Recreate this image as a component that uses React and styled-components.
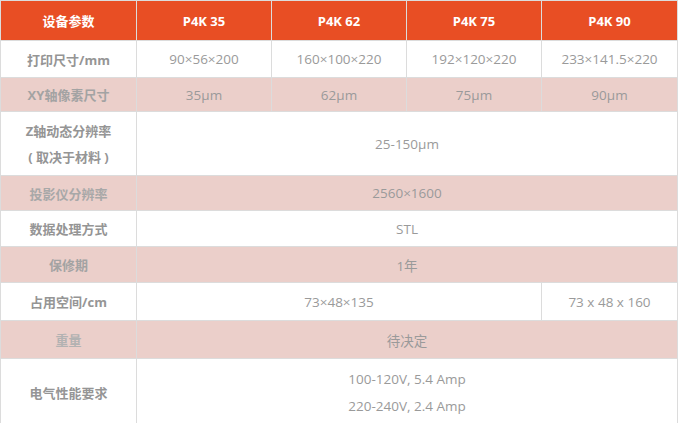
import React from "react";
import styled, { createGlobalStyle } from "styled-components";

const Global = createGlobalStyle`
  html, body { margin: 0; padding: 0; background: #fff; }
  body { font-family: "Open Sans", "Noto Sans CJK SC", sans-serif; }
`;

const Table = styled.table`
  border-collapse: collapse;
  table-layout: fixed;
  width: 678px;
  font-size: 13px;
  color: #9a9a9a;
  text-align: center;
`;

const Row = styled.tr`
  height: ${(p) => p.$h}px;
  background: ${(p) => (p.$pink ? "#ebcfca" : "#fff")};
`;

const HeadRow = styled.tr`
  height: 40px;
  background: #e84e24;
`;

const Th = styled.th`
  border: 1px solid #dcdcdc;
  color: #fff;
  font-weight: 700;
  font-size: 13px;
  padding: 0;
`;

const Label = styled.td`
  border: 1px solid #dcdcdc;
  font-weight: 700;
  color: ${(p) => p.$tone || "#959595"};
  padding: 0;
`;

const Cell = styled.td`
  border: 1px solid #dcdcdc;
  padding: 0;
  font-size: 13.5px;
`;

const Line = styled.div`
  line-height: ${(p) => p.$lh || 26}px;
`;

export default function App() {
  return (
    <>
      <Global />
      <Table>
        <colgroup>
          <col style={{ width: 136 }} />
          <col style={{ width: 135 }} />
          <col style={{ width: 135 }} />
          <col style={{ width: 135 }} />
          <col style={{ width: 136 }} />
        </colgroup>
        <tbody>
          <HeadRow>
            <Th>设备参数</Th>
            <Th>P4K 35</Th>
            <Th>P4K 62</Th>
            <Th>P4K 75</Th>
            <Th>P4K 90</Th>
          </HeadRow>
          <Row $h={37}>
            <Label>打印尺寸/mm</Label>
            <Cell>90×56×200</Cell>
            <Cell>160×100×220</Cell>
            <Cell>192×120×220</Cell>
            <Cell>233×141.5×220</Cell>
          </Row>
          <Row $h={34} $pink>
            <Label $tone="#a3a3a3">XY轴像素尺寸</Label>
            <Cell>35μm</Cell>
            <Cell>62μm</Cell>
            <Cell>75μm</Cell>
            <Cell>90μm</Cell>
          </Row>
          <Row $h={64}>
            <Label>
              <Line>Z轴动态分辨率</Line>
              <Line>( 取决于材料 )</Line>
            </Label>
            <Cell colSpan={4}>25-150μm</Cell>
          </Row>
          <Row $h={35} $pink>
            <Label $tone="#a8a8a8">投影仪分辨率</Label>
            <Cell colSpan={4}>2560×1600</Cell>
          </Row>
          <Row $h={36}>
            <Label>数据处理方式</Label>
            <Cell colSpan={4}>STL</Cell>
          </Row>
          <Row $h={36} $pink>
            <Label $tone="#a3a3a3">保修期</Label>
            <Cell colSpan={4}>1年</Cell>
          </Row>
          <Row $h={38}>
            <Label>占用空间/cm</Label>
            <Cell colSpan={3}>73×48×135</Cell>
            <Cell>73 x 48 x 160</Cell>
          </Row>
          <Row $h={38} $pink>
            <Label $tone="#b2b2b2">重量</Label>
            <Cell colSpan={4}>待决定</Cell>
          </Row>
          <Row $h={68}>
            <Label>电气性能要求</Label>
            <Cell colSpan={4}>
              <Line $lh={27}>100-120V, 5.4 Amp</Line>
              <Line $lh={27}>220-240V, 2.4 Amp</Line>
            </Cell>
          </Row>
        </tbody>
      </Table>
    </>
  );
}
